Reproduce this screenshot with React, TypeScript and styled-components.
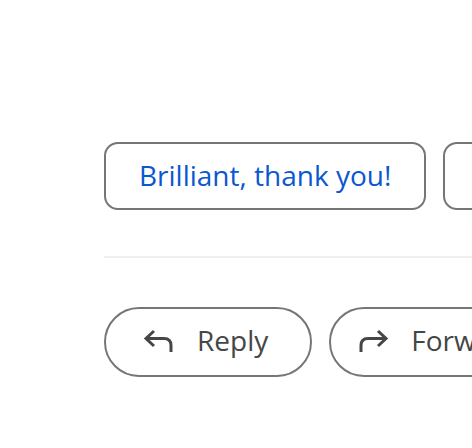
import React from "react";
import styled, { createGlobalStyle } from "styled-components";

const Global = createGlobalStyle`
  html, body {
    margin: 0;
    padding: 0;
    background: #ffffff;
    overflow: hidden;
  }
  body {
    font-family: "Open Sans", Roboto, "Liberation Sans", sans-serif;
  }
`;

const Page = styled.div`
  width: 472px;
  height: 448px;
  box-sizing: border-box;
  padding: 142px 0 0 104px;
  overflow: hidden;
`;

const ChipRow = styled.div`
  display: flex;
  flex-wrap: nowrap;
  gap: 17px;
`;

const Chip = styled.button`
  flex: none;
  box-sizing: border-box;
  height: 68px;
  padding: 0 33px 3px;
  border: 2px solid #747775;
  border-radius: 14px;
  background: #ffffff;
  color: #0b57d0;
  font-family: "Open Sans", Roboto, sans-serif;
  font-weight: 500;
  font-size: 28px;
  line-height: 1;
  white-space: nowrap;
  display: flex;
  align-items: center;
`;

const Divider = styled.div`
  height: 2px;
  background: #efefef;
  margin-top: 46px;
`;

const ActionRow = styled.div`
  display: flex;
  flex-wrap: nowrap;
  gap: 17px;
  margin-top: 49px;
`;

const ActionButton = styled.button<{ $lead: number }>`
  flex: none;
  box-sizing: border-box;
  height: 70px;
  padding: 0 42px 0 ${(p) => p.$lead}px;
  border: 2px solid #747775;
  border-radius: 35px;
  background: #ffffff;
  color: #444746;
  font-family: "Open Sans", Roboto, sans-serif;
  font-weight: 500;
  font-size: 28px;
  line-height: 1;
  white-space: nowrap;
  display: flex;
  align-items: center;
  gap: 22px;
`;

const Label = styled.span`
  padding-bottom: 4px;
`;

const Icon = styled.svg`
  flex: none;
  width: 32px;
  height: 28px;
`;

const ReplyIcon = () => (
  <Icon viewBox="0 0 32 28" fill="none" stroke="#444746" strokeWidth={3} strokeLinecap="butt">
    <path d="M11 3 L3 10.5 L11 18" strokeLinejoin="miter" />
    <path d="M3 10.5 H21 Q28 10.5 28 17.5 V24" />
  </Icon>
);

const ForwardIcon = () => (
  <Icon viewBox="0 0 32 28" fill="none" stroke="#444746" strokeWidth={3} strokeLinecap="butt">
    <path d="M21 3 L29 10.5 L21 18" strokeLinejoin="miter" />
    <path d="M29 10.5 H11 Q4 10.5 4 17.5 V24" />
  </Icon>
);

export default function App() {
  return (
    <>
      <Global />
      <Page>
        <ChipRow>
          <Chip>Brilliant, thank you!</Chip>
          <Chip>Thanks so much!</Chip>
        </ChipRow>
        <Divider />
        <ActionRow>
          <ActionButton $lead={37}>
            <ReplyIcon />
            <Label>Reply</Label>
          </ActionButton>
          <ActionButton $lead={26}>
            <ForwardIcon />
            <Label>Forward</Label>
          </ActionButton>
        </ActionRow>
      </Page>
    </>
  );
}
